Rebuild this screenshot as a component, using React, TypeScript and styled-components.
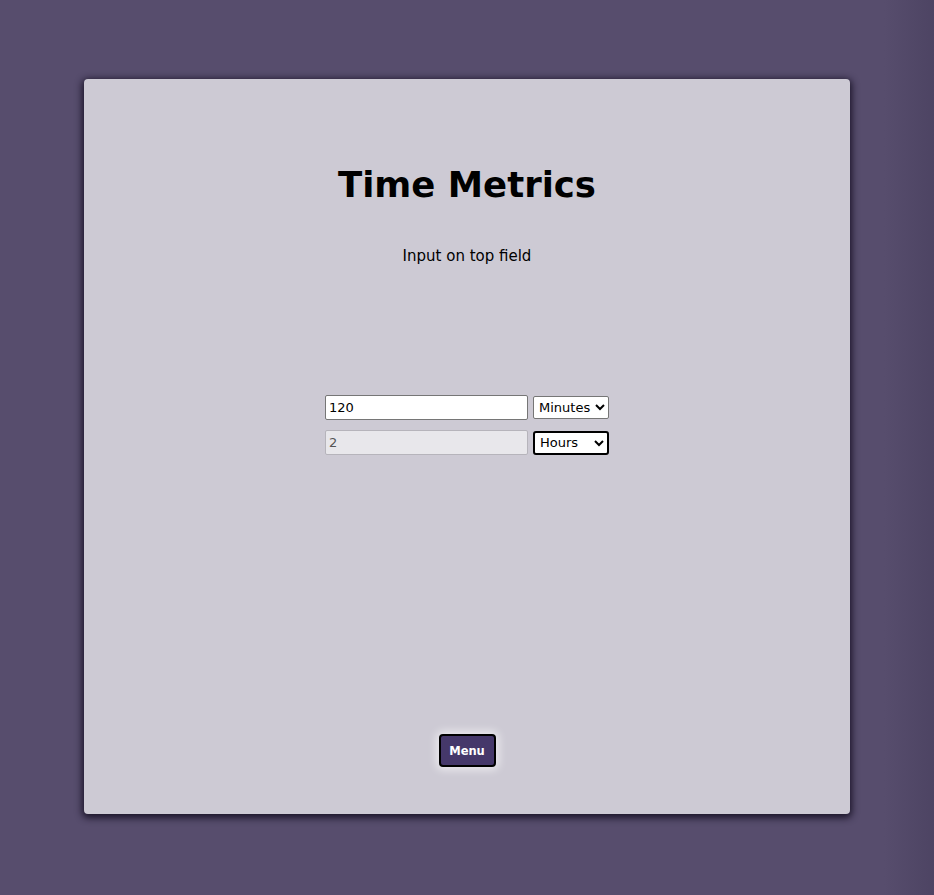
import React from "react";
import styled, { createGlobalStyle } from "styled-components";

const Global = createGlobalStyle`
  html, body { margin: 0; padding: 0; }
  body {
    min-height: 895px;
    background: linear-gradient(to right, #574d6d 0, #574d6d calc(100% - 50px), #4d4463 100%);
    font-family: "Comic Sans MS", "DejaVu Sans", sans-serif;
  }
`;

const Page = styled.div`
  padding: 79px 84px 81px 84px;
  display: flex;
  justify-content: center;
`;

const Card = styled.main`
  width: 766px;
  height: 735px;
  box-sizing: border-box;
  background: #cdcad4;
  border-radius: 4px;
  box-shadow: 0 2px 7px 2px rgba(18, 12, 30, 0.85);
  display: flex;
  flex-direction: column;
  align-items: center;
  padding-top: 80px;
`;

const Title = styled.h1`
  margin: 0;
  font-size: 35.5px;
  line-height: 52px;
  font-weight: bold;
  color: #000;
`;

const Sub = styled.p`
  margin: 35px 0 0;
  font-size: 15px;
  line-height: 20px;
  color: #000;
`;

const Form = styled.div`
  display: grid;
  grid-template-columns: 203px 76px;
  column-gap: 5px;
  row-gap: 10px;
  margin-top: 129px;
`;

const Field = styled.input<{ $disabled?: boolean }>`
  height: 25px;
  box-sizing: border-box;
  border: 1px solid ${(p) => (p.$disabled ? "#b6b4bb" : "#767676")};
  border-radius: 2px;
  padding: 1px 3px;
  font-family: "Comic Sans MS", "DejaVu Sans", sans-serif;
  font-size: 13px;
  color: ${(p) => (p.$disabled ? "#555" : "#000")};
  background: ${(p) => (p.$disabled ? "#e8e7eb" : "#fff")};
`;

const Select = styled.select<{ $focus?: boolean }>`
  height: ${(p) => (p.$focus ? "24px" : "23px")};
  align-self: center;
  box-sizing: border-box;
  border: ${(p) => (p.$focus ? "2px solid #000" : "1px solid #767676")};
  border-radius: ${(p) => (p.$focus ? "3px" : "2px")};
  background: #fff;
  font-family: "Comic Sans MS", "DejaVu Sans", sans-serif;
  font-size: 13px;
  color: #000;
  padding: 0 1px;
  outline: none;
`;

const Spacer = styled.div`
  flex: 1;
`;

const MenuButton = styled.button`
  margin-bottom: 47px;
  width: 57px;
  height: 33px;
  box-sizing: border-box;
  border: 2px solid #000;
  border-radius: 4px;
  background: #45386a;
  color: #fff;
  font-family: "Comic Sans MS", "DejaVu Sans", sans-serif;
  font-weight: bold;
  font-size: 11.5px;
  padding: 0;
  box-shadow: 0 0 8px 3px rgba(255, 255, 255, 0.6);
  cursor: pointer;
`;

export default function App() {
  return (
    <>
      <Global />
      <Page>
        <Card>
          <Title>Time Metrics</Title>
          <Sub>Input on top field</Sub>
          <Form>
            <Field defaultValue="120" />
            <Select defaultValue="Minutes">
              <option>Minutes</option>
              <option>Hours</option>
            </Select>
            <Field $disabled disabled value="2" readOnly />
            <Select $focus defaultValue="Hours">
              <option>Minutes</option>
              <option>Hours</option>
            </Select>
          </Form>
          <Spacer />
          <MenuButton>Menu</MenuButton>
        </Card>
      </Page>
    </>
  );
}
